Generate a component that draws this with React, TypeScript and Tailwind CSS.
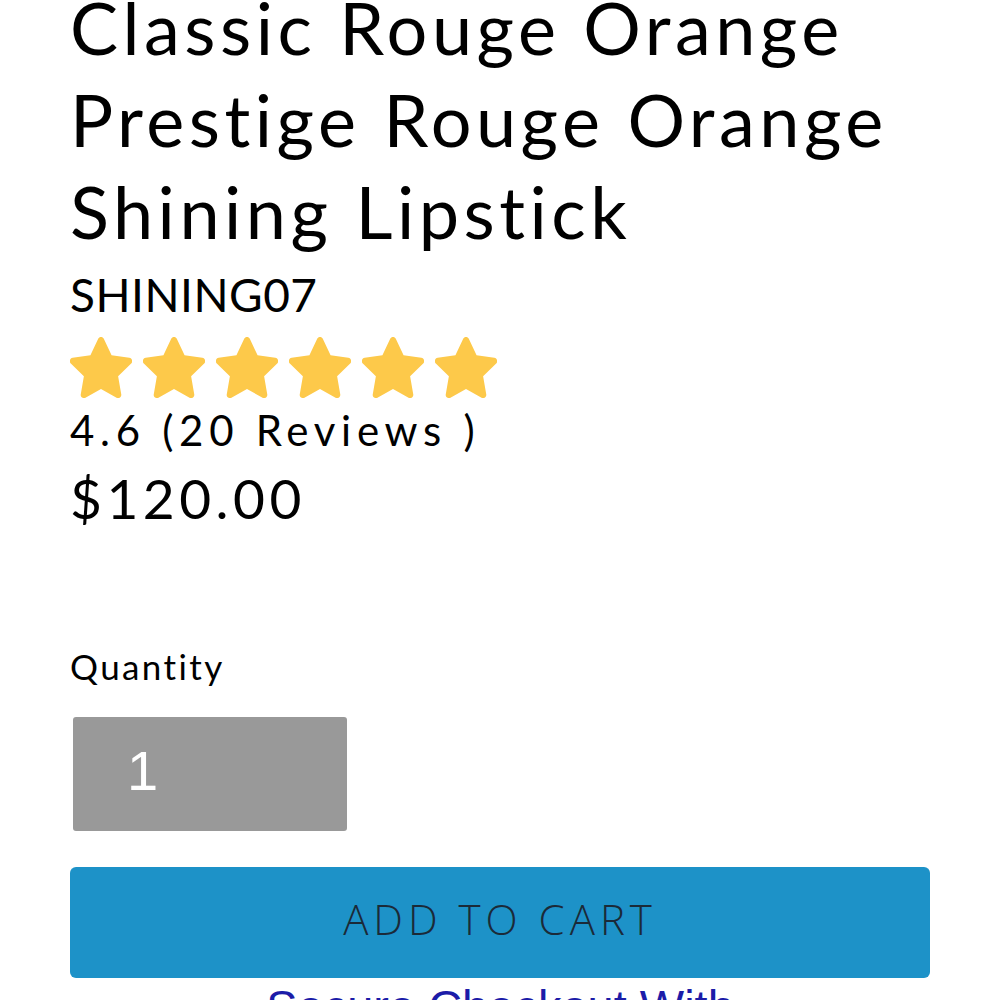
const Star = () => (
  <svg viewBox="2.3 2.2 19.4 19.6" className="h-[61px] w-[62px]" fill="#fdc94a">
    <path d="M12 2.2c.4 0 .7.2.9.6l2.5 5.3 5.7.8c.9.1 1.2 1.2.6 1.8l-4.2 4.1 1 5.8c.2.9-.8 1.5-1.5 1.1L12 18.9l-5 2.8c-.8.4-1.7-.2-1.5-1.1l1-5.8-4.2-4.1c-.6-.6-.3-1.7.6-1.8l5.7-.8 2.5-5.3c.2-.4.5-.6.9-.6z" />
  </svg>
);

export default function App() {
  return (
    <div className="h-[1000px] overflow-hidden bg-white px-[70px] font-['Lato',sans-serif] text-black [font-variant-ligatures:none]">
      <h1 className="-mt-[19px] text-[72px] leading-[92px] font-normal tracking-[4.5px]">
        Classic Rouge Orange Prestige Rouge Orange Shining Lipstick
      </h1>
      <p className="mt-[10px] text-[46px] leading-[56px] tracking-[0.5px]">SHINING07</p>
      <div className="mt-[14px] flex gap-[11px]">
        <Star />
        <Star />
        <Star />
        <Star />
        <Star />
        <Star />
      </div>
      <p className="mt-[5px] text-[42px] leading-[54px] tracking-[5.7px]">4.6 (20 Reviews )</p>
      <p className="mt-[9px] text-[55px] leading-[64px] tracking-[4.5px]">$120.00</p>
      <p className="mt-[113px] text-[35px] leading-[46px] tracking-[2.4px]">Quantity</p>
      <div className="mt-[28px] ml-[3px] flex h-[114px] w-[274px] items-center rounded-[3px] bg-[#999999] pb-[6px] pl-[54px] font-['Liberation_Sans',sans-serif] text-[56px] text-white">
        1
      </div>
      <button className="mt-[36px] flex h-[111px] w-full items-center justify-center rounded-[6px] bg-[#1d92c8] pb-[8px] font-['Open_Sans',sans-serif] text-[42px] font-light tracking-[5px] text-[#1b2a38]">
        ADD TO CART
      </button>
      <p className="mt-[1px] text-center font-['Liberation_Sans',sans-serif] text-[47px] leading-[56px] text-[#1c1ca8]">
        Secure Checkout With
      </p>
    </div>
  );
}
